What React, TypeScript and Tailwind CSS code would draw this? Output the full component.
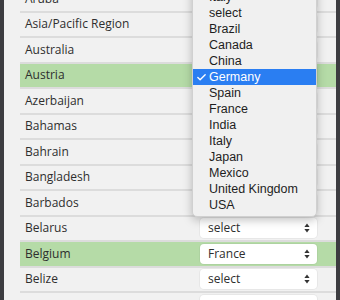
import { Check } from "lucide-react";

// rows 0-8 sit under the open menu, so their select text is not shown
const rows = [
  { name: "Aruba", value: "" },
  { name: "Asia/Pacific Region", value: "" },
  { name: "Australia", value: "" },
  { name: "Austria", value: "", hit: true },
  { name: "Azerbaijan", value: "" },
  { name: "Bahamas", value: "" },
  { name: "Bahrain", value: "" },
  { name: "Bangladesh", value: "" },
  { name: "Barbados", value: "" },
  { name: "Belarus", value: "select" },
  { name: "Belgium", value: "France", hit: true },
  { name: "Belize", value: "select" },
  { name: "", value: "" },
];

const options = [
  "Italy",
  "select",
  "Brazil",
  "Canada",
  "China",
  "Germany",
  "Spain",
  "France",
  "India",
  "Italy",
  "Japan",
  "Mexico",
  "United Kingdom",
  "USA",
];

function Arrows() {
  return (
    <svg width="6" height="10" viewBox="0 0 6 10" className="text-[#333]">
      <path d="M3 0.5 L5.6 4 H0.4 Z" fill="currentColor" />
      <path d="M3 9.5 L5.6 6 H0.4 Z" fill="currentColor" />
    </svg>
  );
}

export default function App() {
  return (
    <div className="w-[340px] h-[300px] bg-[#3c3c40] flex overflow-hidden">
      <div className="relative ml-[4px] w-[332px] h-full bg-[#f1f1f1] overflow-hidden pl-[16px]">
        <div className="-mt-[13px] flex flex-col" style={{ fontFamily: '"Open Sans", sans-serif' }}>
          {rows.map((r, i) => (
            <div
              key={i}
              className={`flex items-center h-[25.5px] border-b-[2px] border-[#dcdcdc] text-[12px] text-[#2e2e2e] ${r.hit ? "bg-[#b5dba7]" : ""}`}
            >
              <div className="w-[180px] pl-[5px] whitespace-nowrap">{r.name}</div>
              <div className="w-[117px] h-[20px] bg-white rounded-[4px] shadow-[0_0_0_1px_rgba(0,0,0,0.04)] flex items-center justify-between pl-[8px] pr-[7px]">
                <span>{r.value}</span>
                <Arrows />
              </div>
            </div>
          ))}
        </div>

        <div
          className="absolute left-[188px] top-[-15px] w-[125px] h-[232px] bg-[#f0f0f0] rounded-[5px] border border-[#d0d0d0] shadow-[0_3px_10px_rgba(0,0,0,0.25)] pt-[3px] text-[12.5px] text-[#1e1e1e]"
          style={{ fontFamily: '"Liberation Sans", Arial, sans-serif' }}
        >
          {options.map((o, i) => (
            <div
              key={i}
              className={`relative h-[16px] leading-[16px] pl-[16px] ${i === 5 ? "bg-[#2a7ef2] text-white" : ""}`}
            >
              {i === 5 && (
                <Check size={11} strokeWidth={3} className="absolute left-[3px] top-[3px]" />
              )}
              {o}
            </div>
          ))}
        </div>
      </div>
    </div>
  );
}
